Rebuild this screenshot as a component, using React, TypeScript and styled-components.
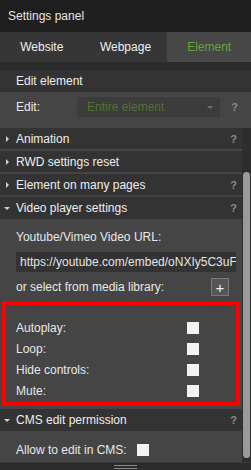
import React from "react";
import styled, { createGlobalStyle } from "styled-components";

const Global = createGlobalStyle`
  html, body { margin: 0; padding: 0; background: #2b2b2b; }
  body { font-family: "Liberation Sans", Arial, sans-serif; font-size: 12px; color: #e8e8e8; }
  * { box-sizing: border-box; }
`;

const Panel = styled.div`
  width: 251px;
  height: 470px;
  display: flex;
  flex-direction: column;
  background: #2b2b2b;
  overflow: hidden;
`;

const TitleBar = styled.div`
  height: 32px;
  display: flex;
  align-items: center;
  padding-left: 8px;
  background: #1f1f1f;
  color: #e6e6e6;
`;

const Tabs = styled.div`
  height: 30px;
  display: grid;
  grid-template-columns: 1fr 1fr 1fr;
  background: #363636;
`;

const Tab = styled.div<{ $active?: boolean }>`
  display: flex;
  align-items: center;
  justify-content: center;
  background: ${(p) => (p.$active ? "#474747" : "#363636")};
  color: ${(p) => (p.$active ? "#6aa03a" : "#eeeeee")};
`;

const Gap = styled.div`
  height: 8px;
  background: #2b2b2b;
`;

const SubHeader = styled.div`
  height: 22px;
  display: flex;
  align-items: center;
  padding-left: 16px;
  background: #333333;
  color: #eeeeee;
`;

const EditRow = styled.div`
  height: 36px;
  display: flex;
  align-items: flex-start;
  padding: 5px 0 0 16px;
  background: #454545;
`;

const EditLabel = styled.div`
  width: 61px;
  height: 20px;
  display: flex;
  align-items: center;
  color: #e8e8e8;
`;

const Select = styled.div`
  width: 143px;
  height: 20px;
  display: flex;
  align-items: center;
  justify-content: space-between;
  padding: 0 7px 0 10px;
  background: #3c3c3c;
  color: #52702f;
`;

const Caret = styled.span`
  width: 0;
  height: 0;
  border-left: 3px solid transparent;
  border-right: 3px solid transparent;
  border-top: 3px solid #707070;
`;

const Help = styled.span`
  margin-left: auto;
  margin-right: 5px;
  font-weight: bold;
  font-size: 11px;
  color: #8a8a8a;
`;

const EditHelp = styled(Help)`
  height: 20px;
  display: flex;
  align-items: center;
  margin-right: 13px;
`;

const ScrollArea = styled.div`
  flex: 1;
  display: flex;
  min-height: 0;
`;

const Content = styled.div`
  width: 242px;
  display: flex;
  flex-direction: column;
  background: #454545;
  overflow: hidden;
`;

const Track = styled.div`
  width: 9px;
  padding: 44px 1px 0 1px;
  background: #2d2d2d;
`;

const Thumb = styled.div`
  width: 7px;
  height: 286px;
  border-radius: 4px;
  background: #9a9a9a;
`;

const SectionHeader = styled.div<{ $tall?: boolean }>`
  height: ${(p) => (p.$tall ? "22px" : "21px")};
  flex-shrink: 0;
  display: flex;
  align-items: center;
  background: #333333;
  margin-bottom: ${(p) => (p.$tall ? "0" : "2px")};
  color: #eeeeee;
`;

const Arrow = styled.span<{ $open?: boolean }>`
  width: 16px;
  display: flex;
  justify-content: center;
  padding-right: 2px;
  &::before {
    content: "";
    width: 0;
    height: 0;
    ${(p) =>
      p.$open
        ? `border-left: 3px solid transparent; border-right: 3px solid transparent; border-top: 3px solid #cfcfcf;`
        : `border-top: 3px solid transparent; border-bottom: 3px solid transparent; border-left: 3px solid #cfcfcf;`}
  }
`;

const Body = styled.div`
  display: flex;
  flex-direction: column;
  padding: 8px 6px 4px 16px;
  flex-shrink: 0;
`;

const Line = styled.div`
  height: 20px;
  display: flex;
  align-items: center;
  color: #e8e8e8;
  flex-shrink: 0;
`;

const UrlInput = styled.div`
  height: 20px;
  margin-top: 5px;
  width: 220px;
  display: flex;
  align-items: center;
  padding-left: 4px;
  background: #333333;
  color: #e4e4e4;
  white-space: nowrap;
  overflow: hidden;
`;

const LibraryRow = styled.div`
  height: 20px;
  margin-top: 5px;
  display: flex;
  align-items: center;
  justify-content: space-between;
  padding-right: 7px;
  color: #e8e8e8;
`;

const PlusButton = styled.div`
  width: 18px;
  height: 18px;
  display: flex;
  align-items: center;
  justify-content: center;
  background: #555555;
  border: 1px solid #7a7a7a;
  color: #f0f0f0;
  font-size: 15px;
  line-height: 1;
`;

const Highlight = styled.div`
  margin: 0 2px 3px 2px;
  border: 4px solid #ff0000;
  padding: 12px 0 1px 10px;
  display: flex;
  flex-direction: column;
  flex-shrink: 0;
`;

const CheckRow = styled.div`
  height: 21px;
  display: grid;
  grid-template-columns: 171px 12px;
  align-items: center;
  color: #e8e8e8;
`;

const Box = styled.span`
  width: 12px;
  height: 12px;
  background: #f2f2f2;
`;

const CmsRow = styled.div`
  height: 30px;
  display: flex;
  align-items: center;
  gap: 10px;
  padding: 8px 0 0 16px;
  color: #e8e8e8;
  flex-shrink: 0;
`;

const BottomBar = styled.div`
  height: 8px;
  flex-shrink: 0;
  display: flex;
  flex-direction: column;
  align-items: center;
  gap: 2px;
  padding-top: 2px;
  background: #2b2b2b;
  border-top: 1px solid #3a3a3a;
`;

const Grip = styled.span`
  width: 23px;
  height: 1px;
  background: #8a8a8a;
`;

const sections = [
  { title: "Animation", help: true },
  { title: "RWD settings reset", help: false },
  { title: "Element on many pages", help: true },
];

const checks = ["Autoplay:", "Loop:", "Hide controls:", "Mute:"];

export default function App() {
  return (
    <>
      <Global />
      <Panel>
        <TitleBar>Settings panel</TitleBar>
        <Tabs>
          <Tab>Website</Tab>
          <Tab>Webpage</Tab>
          <Tab $active>Element</Tab>
        </Tabs>
        <Gap />
        <SubHeader>Edit element</SubHeader>
        <EditRow>
          <EditLabel>Edit:</EditLabel>
          <Select>
            <span>Entire element</span>
            <Caret />
          </Select>
          <EditHelp>?</EditHelp>
        </EditRow>
        <ScrollArea>
          <Content>
            {sections.map((s) => (
              <SectionHeader key={s.title}>
                <Arrow />
                {s.title}
                {s.help && <Help>?</Help>}
              </SectionHeader>
            ))}
            <SectionHeader $tall>
              <Arrow $open />
              Video player settings
              <Help>?</Help>
            </SectionHeader>
            <Body>
              <Line>Youtube/Vimeo Video URL:</Line>
              <UrlInput>https://youtube.com/embed/oNXIy5C3uF</UrlInput>
              <LibraryRow>
                or select from media library:
                <PlusButton>+</PlusButton>
              </LibraryRow>
            </Body>
            <Highlight>
              {checks.map((c) => (
                <CheckRow key={c}>
                  <span>{c}</span>
                  <Box />
                </CheckRow>
              ))}
            </Highlight>
            <SectionHeader $tall>
              <Arrow $open />
              CMS edit permission
              <Help>?</Help>
            </SectionHeader>
            <CmsRow>
              Allow to edit in CMS:
              <Box />
            </CmsRow>
          </Content>
          <Track>
            <Thumb />
          </Track>
        </ScrollArea>
        <BottomBar>
          <Grip />
          <Grip />
        </BottomBar>
      </Panel>
    </>
  );
}
